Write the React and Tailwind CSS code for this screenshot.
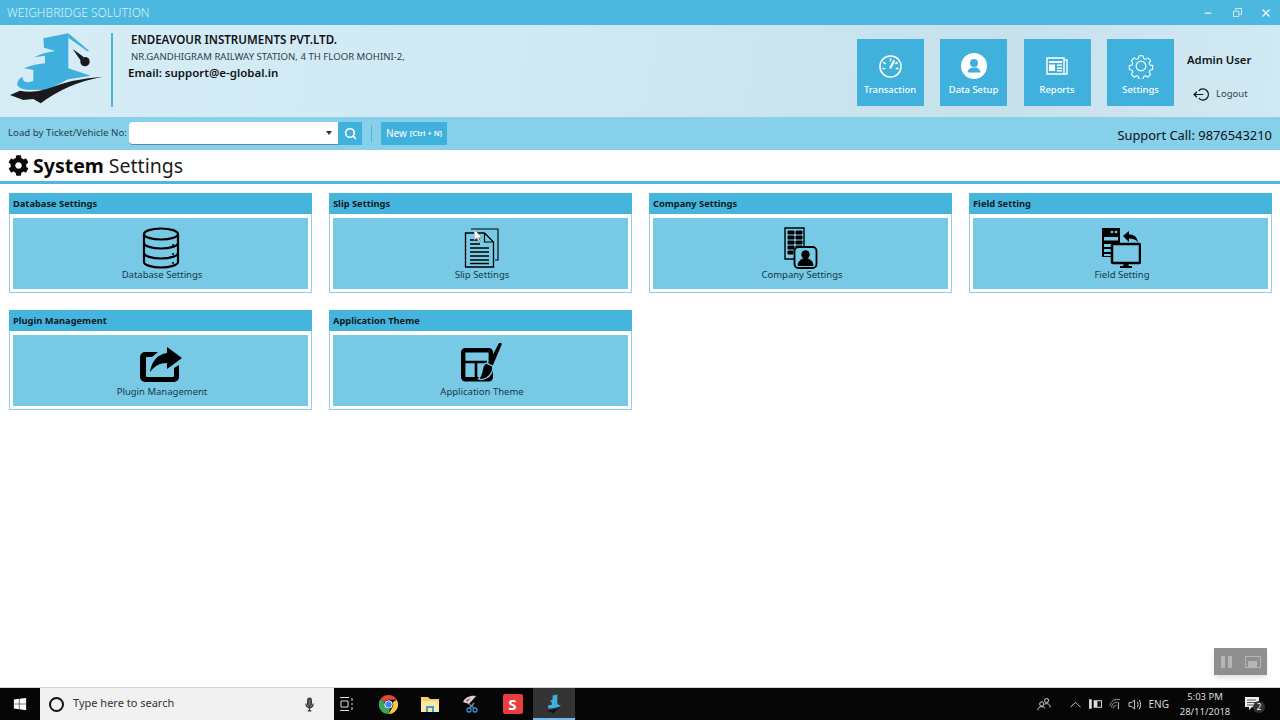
import { FaCog, FaWindows } from "react-icons/fa";
import { FiSearch, FiX, FiMinus } from "react-icons/fi";

const font = { fontFamily: '"Noto Sans", "Open Sans", sans-serif' };

function Logo() {
  return (
    <svg viewBox="0 0 360 270" width="120" height="90" className="shrink-0">
      <path fill="#3fb0dd" d="M130 40 L205 25 L205 130 L272 152 L205 163 L140 195 L80 194 Q50 190 52 175 Q54 162 68 155 Q66 172 85 172 L100 168 L100 135 L72 130 Q100 118 135 115 L135 92 L102 97 Q130 82 166 78 L132 68 Z" />
      <path fill="#3fb0dd" d="M205 25 L268 78 L262 79 L205 38 Z" />
      <path fill="#1a1a1e" d="M30 210 L60 197 Q100 205 140 192 Q220 160 308 155 Q200 175 122 235 L100 222 L70 225 Z" />
      <path fill="#1a1a1e" d="M218 72 L250 95 L243 108 Z" />
      <circle cx="255" cy="110" r="14" fill="#1a1a1e" />
    </svg>
  );
}

function NavIcon({ name }) {
  if (name === "Transaction") {
    return (
      <svg viewBox="0 0 26 26" width="25" height="25" fill="none" stroke="#fff" strokeWidth="1.600" strokeLinecap="round">
        <circle cx="13" cy="13" r="11" />
        <path d="M13 5v2M6 9l1.500 1M20 9l-1.500 1M5 15h2M19 15h2" />
        <path d="M16.500 7.500 13 14" strokeWidth="2.400" />
      </svg>
    );
  }
  if (name === "Data Setup") {
    return (
      <svg viewBox="0 0 26 26" width="26" height="26">
        <circle cx="13" cy="13" r="13" fill="#fff" />
        <circle cx="13" cy="10" r="4" fill="#3fb0dd" />
        <path fill="#3fb0dd" d="M6.500 19.500c.5-3.500 3-4.500 4.500-5h4c1.500.5 4 1.500 4.500 5z" />
      </svg>
    );
  }
  if (name === "Reports") {
    return (
      <svg viewBox="0 0 22 18" width="22" height="18">
        <path fill="none" stroke="#fff" strokeWidth="1.400" d="M1 1h17v16H1zM18 3h3v14h-3" />
        <path fill="#fff" d="M3 4h13v2H3zM3 7.500h6v6.500H3zM11 7.500h5v1.500h-5zM11 10.500h5V12h-5zM11 13h5v1.500h-5z" />
      </svg>
    );
  }
  return (
    <svg viewBox="0 0 24 24" width="26" height="26" fill="none" stroke="#fff" strokeWidth="1.100" strokeLinejoin="round">
      <path d="M10 1.500h4l.7 2.900 1.900.8 2.500-1.500 2.800 2.800-1.500 2.500.8 1.900 2.800.7v4l-2.800.7-.8 1.900 1.500 2.500-2.800 2.800-2.500-1.500-1.900.8-.7 2.700h-4l-.7-2.700-1.900-.8-2.500 1.500-2.800-2.800 1.500-2.500-.8-1.900-2.800-.7v-4l2.800-.7.8-1.900-1.500-2.500 2.800-2.800 2.500 1.500 1.900-.8z" transform="translate(1.200 1.200) scale(.9)" />
      <circle cx="12" cy="12" r="4.500" />
    </svg>
  );
}

function NavButton({ label }) {
  return (
    <div className="w-[67px] h-[67px] bg-[#40b0dc] flex flex-col items-center pt-[14px] text-white">
      <div className="h-[26px] flex items-center justify-center">
        <NavIcon name={label} />
      </div>
      <span className="text-[9.400px] font-medium mt-[4px] leading-[14px] whitespace-nowrap">{label}</span>
    </div>
  );
}

function CardIcon({ name }) {
  if (name === "Database Settings") {
    return (
      <svg viewBox="0 0 38 42" width="38" height="42" fill="none" stroke="#000" strokeWidth="2.200">
        <ellipse cx="19" cy="7" rx="17" ry="5.500" />
        <path d="M2 7v28c0 3 8 5.500 17 5.500S36 38 36 35V7" />
        <path d="M2 16c0 3 8 5.500 17 5.500S36 19 36 16M2 26c0 3 8 5.500 17 5.500S36 29 36 26" />
        <circle cx="31" cy="18" r="1" fill="#000" stroke="none" />
        <circle cx="31" cy="27" r="1" fill="#000" stroke="none" />
        <circle cx="31" cy="36" r="1" fill="#000" stroke="none" />
      </svg>
    );
  }
  if (name === "Slip Settings") {
    return (
      <svg viewBox="0 0 36 40" width="36" height="40" fill="none" stroke="#000">
        <path strokeWidth="1.100" d="M8 1h27v31h-3" />
        <path strokeWidth="1.300" fill="#78c9e6" d="M2.500 5h19l9 9v25h-28z" />
        <path strokeWidth="1.200" d="M21.500 5v9h9" />
        <path strokeWidth="1.700" d="M7 12h10M7 16h10M7 20h19M7 24h19M7 28h19M7 32h19M7 35.500h19" />
      </svg>
    );
  }
  if (name === "Company Settings") {
    return (
      <svg viewBox="0 0 36 42" width="36" height="42" fill="none" stroke="#000">
        <path strokeWidth="1.400" d="M2 1h19v31H2z" />
        <path fill="#000" d="M5 4h6v3H5zM13 4h6v3h-6zM5 9h6v3H5zM13 9h6v3h-6zM5 14h6v3H5zM13 14h6v3h-6zM5 19h6v3H5zM13 19h6v3h-6zM5 24h5v3H5z" />
        <rect x="11.500" y="20" width="22" height="21" rx="4" fill="#78c9e6" strokeWidth="1.800" />
        <circle cx="22.500" cy="27.500" r="3.800" fill="#000" />
        <path fill="#000" d="M15 38.500c.5-5 4-7 7.500-7s7 2 7.500 7z" />
      </svg>
    );
  }
  if (name === "Field Setting") {
    return (
      <svg viewBox="0 0 40 42" width="40" height="42">
        <path fill="#000" d="M1 1h18v29H1z" />
        <path fill="#78c9e6" d="M3 10h14v3.500H3zM3 17h8v3H3zM3 22h8v3H3zM3 27h8v2H3z" />
        <circle cx="11" cy="5" r="1.300" fill="#78c9e6" />
        <circle cx="15" cy="5" r="1.300" fill="#78c9e6" />
        <path fill="#000" d="M22 9l6-5v3.500c5 0 8 2 9 8-2-3-5-4-9-4V15z" />
        <rect x="11" y="17" width="28" height="19" rx="1" fill="#78c9e6" stroke="#000" strokeWidth="2.500" />
        <path fill="#000" d="M23 36h4l1 3h3v2H19v-2h3z" />
      </svg>
    );
  }
  if (name === "Plugin Management") {
    return (
      <svg viewBox="0 0 42 36" width="42" height="36">
        <path fill="#000" d="M6 5h12l-6 5H7a1 1 0 0 0-1 1v18a1 1 0 0 0 1 1h26a1 1 0 0 0 1-1v-8l5-3v12a5 5 0 0 1-5 5H5a5 5 0 0 1-5-5V10a5 5 0 0 1 5-5z" />
        <path fill="#000" d="M27 0l15 11-15 11v-6c-8 0-12 3-17 9 1-9 7-18 17-19z" />
      </svg>
    );
  }
  return (
    <svg viewBox="0 0 42 44" width="42" height="44">
      <rect x="3.200" y="7.200" width="27.600" height="29" rx="2" fill="none" stroke="#000" strokeWidth="4.400" />
      <path fill="none" stroke="#000" strokeWidth="2.600" d="M3 19h24M16 19v17" />
      <path fill="#000" d="M39 0c2-1 3 0 2.500 2L33 22l-4.500-2z" />
      <path fill="#000" stroke="#78c9e6" strokeWidth="1.300" d="M26 20l6.500 3c1 5-2 10-6 12-3 1.500-6 2-8 1 2-2 2.500-4 3.500-8 .5-4 1.500-6.500 4-8z" />
    </svg>
  );
}

function Card({ title }) {
  return (
    <div className="h-[100px] flex flex-col bg-white border-x border-b border-[#8fd0e8]">
      <div className="h-[21px] -mx-px bg-[#46b5de] flex items-center px-[4px] pt-[1px] text-[9.300px] font-bold text-[#0b1a22] leading-none">
        {title}
      </div>
      <div className="flex-1 mx-[3px] mt-[4px] mb-[3px] bg-[#78c9e6] flex flex-col items-center justify-end pb-[8px]">
        <div className="h-[44px] flex items-center justify-center">
          <CardIcon name={title} />
        </div>
        <span className="text-[9.500px] leading-[13px] mt-[-2px] ml-[3px] text-[#123a4e]">{title}</span>
      </div>
    </div>
  );
}

function Toolbar() {
  return (
    <div className="h-[33px] bg-[#86d0ea] flex items-center pl-[8px] pr-[8px]">
      <span className="text-[9.700px] text-[#26414f] w-[121px] whitespace-nowrap">Load by Ticket/Vehicle No:</span>
      <div className="w-[209px] h-[23px] bg-white border-b border-[#5b8ea6] rounded-l-sm flex items-center justify-end pr-[6px]">
        <span className="w-0 h-0 border-x-[3px] border-x-transparent border-t-[4px] border-t-[#333]" />
      </div>
      <div className="w-[24px] h-[23px] bg-[#40b0dc] flex items-center justify-center text-white">
        <FiSearch size={13} strokeWidth={3} />
      </div>
      <div className="w-px h-[17px] bg-[#4db4dc] ml-[9px] mr-[9px]" />
      <div className="w-[66px] h-[23px] bg-[#40b0dc] text-white flex items-center justify-center gap-[3px] whitespace-nowrap">
        <span className="text-[10px]">New</span>
        <span className="text-[7.500px] font-semibold mt-[1px]">[Ctrl + N]</span>
      </div>
      <span className="ml-auto mt-[4px] text-[12.900px] text-[#0b1216] whitespace-nowrap">Support Call: 9876543210</span>
    </div>
  );
}

function Taskbar() {
  return (
    <div className="h-[33px] bg-[#060606] border-t border-[#d4d4d4] flex items-center text-[#e0e0e0]">
      <div className="w-[40px] flex justify-center text-white">
        <FaWindows size={14} />
      </div>
      <div className="w-[294px] h-full bg-[#f1f1f1] flex items-center pl-[9px] pr-[20px] text-[#333]">
        <span className="w-[15px] h-[15px] rounded-full border-2 border-[#111] mr-[9px]" />
        <span className="text-[11px] mb-[1px]">Type here to search</span>
        <svg viewBox="0 0 10 16" width="9" height="15" className="ml-auto" fill="none" stroke="#333" strokeWidth="1.400">
          <rect x="3" y="1" width="4" height="9" rx="2" fill="#666" />
          <path d="M1 7c0 6 8 6 8 0M5 12v3M3 15h4" />
        </svg>
      </div>
      <div className="flex items-center h-full">
        <div className="w-[41px] flex justify-center ml-[-8px]">
          <svg viewBox="0 0 14 14" width="14" height="14" fill="none" stroke="#ddd">
            <path d="M0 .5h9M0 13.500h9M1 4h7v6H1zM12 1v3M12 6v2M12 10v3" />
          </svg>
        </div>
        <div className="w-[42px] flex justify-center">
          <svg viewBox="0 0 20 20" width="19" height="19">
            <path fill="#e0463a" d="M10 0a10 10 0 0 1 8.700 5H10a5 5 0 0 0-4.800 3.600L2.200 3.500A10 10 0 0 1 10 0z" />
            <path fill="#f7c93e" d="M18.700 5a10 10 0 0 1-8.700 15l4.300-7.500A5 5 0 0 0 14.300 7.500z" />
            <path fill="#3aa757" d="M2.200 3.500 6.500 11a4 4 0 0 0 5 3.800L10 20A10 10 0 0 1 2.200 3.500z" />
            <circle cx="10" cy="10" r="4" fill="#4285f4" stroke="#fff" />
          </svg>
        </div>
        <div className="w-[41px] flex justify-center">
          <svg viewBox="0 0 18 16" width="18" height="16">
            <path fill="#f6cf63" d="M0 1h7l2 2h9v13H0z" />
            <path fill="#fbe7a1" d="M0 5h18v11H0z" />
            <path fill="#3aa0d0" d="M5 10h8v6h-2v-4H7v4H5z" />
          </svg>
        </div>
        <div className="w-[42px] flex justify-center">
          <svg viewBox="0 0 18 18" width="18" height="18">
            <path fill="#d9d4d4" d="M1 7c2-5 8-7 13-6L7 9z" />
            <path fill="#c8484c" d="M4 5l5-2-4 4z" />
            <path stroke="#3a8fd0" strokeWidth="1.500" fill="none" d="M7 9l5 4" />
            <circle cx="13" cy="15" r="2" fill="none" stroke="#3a8fd0" strokeWidth="1.300" />
            <circle cx="7" cy="15" r="2" fill="none" stroke="#3a8fd0" strokeWidth="1.300" />
            <path stroke="#888" strokeWidth="1.500" d="M12 8l-4 5" />
          </svg>
        </div>
        <div className="w-[41px] flex justify-center">
          <div className="w-[20px] h-[20px] bg-[#e5403f] rounded-[2px] flex items-center justify-center text-white text-[15px] font-bold leading-none">S</div>
        </div>
        <div className="w-[42px] h-full bg-[#333] flex justify-center items-center relative">
          <svg viewBox="0 0 18 20" width="17" height="20">
            <path fill="#3fb0dd" d="M7 1l5-1v10l4 2-6 2-7 1q-2-2 0-4h3V8l-2-1 3-2z" />
            <path fill="#111" d="M1 17q6 0 15-4-5 3-8 7z" />
          </svg>
          <span className="absolute bottom-0 left-0 right-0 h-[2px] bg-[#76b9ed]" />
        </div>
      </div>
      <div className="ml-auto flex items-center h-full text-[#d8d8d8]">
        <svg viewBox="0 0 16 16" width="14" height="14" fill="none" stroke="#ddd" strokeWidth="1.100" className="mr-[19px]">
          <circle cx="5.500" cy="8" r="2.500" />
          <path d="M1 15c0-3 2-4 4.500-4S9 12 9 13" />
          <circle cx="11" cy="4" r="2.300" />
          <path d="M9 8c3-1 6 0 6 4" />
        </svg>
        <svg viewBox="0 0 12 7" width="11" height="7" fill="none" stroke="#ddd" className="mr-[8px]"><path d="M.5 6.500 6 1l5.500 5.500" /></svg>
        <svg viewBox="0 0 14 10" width="13" height="10" className="mr-[7px]">
          <path fill="#ddd" d="M0 0h3v10H0zM5 1h9v8H5z" />
          <path fill="#111" d="M9 2h4v6H9z" />
        </svg>
        <svg viewBox="0 0 14 14" width="12" height="12" fill="none" stroke="#aaa" className="mr-[7px]">
          <path d="M1 9a9 9 0 0 1 12-7M3 11a6 6 0 0 1 7-6M5 12a3 3 0 0 1 4-3" />
          <path d="M11 5v8" stroke="#ddd" />
        </svg>
        <svg viewBox="0 0 16 14" width="15" height="13" fill="none" stroke="#ddd" className="mr-[6px]">
          <path d="M1 5h3l3-3v10L4 9H1zM10 4c1 2 1 4 0 6M12 2c2 3 2 7 0 10" />
        </svg>
        <span className="text-[10px] mr-[8px]">ENG</span>
        <div className="w-[56px] text-center text-[9.500px] leading-[15px] text-[#dcdcdc]">
          <div>5:03 PM</div>
          <div>28/11/2018</div>
        </div>
        <div className="w-[38px] flex justify-center relative mr-[9px]">
          <svg viewBox="0 0 14 14" width="14" height="14"><path fill="#eee" d="M0 0h14v10H7l-3 3v-3H0z" /><path stroke="#555" d="M2 3h9M2 5.500h9M2 8h6" /></svg>
          <span className="absolute left-[20px] top-[4px] w-[12px] h-[12px] rounded-full bg-[#333] text-white text-[8px] leading-[12px] text-center">2</span>
        </div>
      </div>
    </div>
  );
}

function App() {
  return (
    <div style={font} className="relative w-[1280px] h-screen bg-white flex flex-col overflow-hidden">
      {/* title bar */}
      <div className="h-[25px] bg-[#4cb8df] flex items-center pl-[7px] text-[#dff3fa]">
        <span className="text-[12px] font-light whitespace-nowrap">WEIGHBRIDGE SOLUTION</span>
        <div className="ml-auto flex items-center text-[#e6f6fb]">
          <FiMinus size={10} strokeWidth={3} />
          <svg viewBox="0 0 10 10" width="9" height="9" className="ml-[20px]" fill="none" stroke="#d8f0f8"><path d="M.5 3.500h6v6h-6zM3 3V.5h6.500V7H7" /></svg>
          <FiX size={12} strokeWidth={3} className="ml-[18px] mr-[8px]" />
        </div>
      </div>

      {/* header */}
      <div className="h-[92px] bg-[linear-gradient(100deg,#d6edf6_0%,#cfe8f3_45%,#c7e1ec_78%,#d1e9f3_100%)] flex items-start">
        <Logo />
        <div className="w-[2px] h-[74px] mt-[8px] bg-[#49b3da] mr-[18px] -ml-[9px]" />
        <div className="pt-[7px] text-[#101316]">
          <div className="text-[11.600px] font-semibold leading-[15px] whitespace-nowrap">ENDEAVOUR INSTRUMENTS PVT.LTD.</div>
          <div className="text-[9.600px] leading-[16px] mt-[2px] text-[#2c3e48] whitespace-nowrap">NR.GANDHIGRAM RAILWAY STATION, 4 TH FLOOR MOHINI-2,</div>
          <div className="text-[11.500px] font-semibold leading-[16px] -ml-[3px] whitespace-nowrap">Email: support@e-global.in</div>
        </div>
        <div className="ml-auto flex items-start pt-[14px]">
          <div className="flex gap-[16.500px]">
            <NavButton label="Transaction" />
            <NavButton label="Data Setup" />
            <NavButton label="Reports" />
            <NavButton label="Settings" />
          </div>
          <div className="w-[106px] pl-[13px] pt-[13px]">
            <div className="text-[11.300px] font-semibold text-[#0d1418] leading-[16px]">Admin User</div>
            <div className="flex items-center mt-[19px] pl-[6px] gap-[6px] text-[#33444e]">
              <svg viewBox="0 0 18 14" width="17" height="13" fill="none" stroke="#111" strokeWidth="1.300">
                <path d="M6 3a6 6 0 1 1 0 8" />
                <path d="M11 7H1M4 4 1 7l3 3" />
              </svg>
              <span className="text-[9.500px]">Logout</span>
            </div>
          </div>
        </div>
      </div>

      <Toolbar />

      {/* page title */}
      <div className="h-[31px] flex items-center pl-[8px] gap-[4px]">
        <FaCog size={21} color="#0a0a0a" />
        <span className="text-[19.500px] text-[#1b1b1b] whitespace-nowrap"><b className="font-bold text-[#0a0a0a]">System</b> Settings</span>
      </div>
      <div className="h-[3px] bg-[#4cb8df]" />

      {/* cards */}
      <div className="flex-1 pl-[9px] pr-[8px] pt-[9px]">
        <div className="grid grid-cols-4 gap-x-[17px] gap-y-[17px]">
          <Card title="Database Settings" />
          <Card title="Slip Settings" />
          <Card title="Company Settings" />
          <Card title="Field Setting" />
          <Card title="Plugin Management" />
          <Card title="Application Theme" />
        </div>
      </div>

      <Taskbar />

      {/* mouse cursor on slip settings */}
      <svg viewBox="0 0 10 16" width="9" height="14" className="absolute left-[474px] top-[229px]">
        <path d="M0 0v13l3-3 2 5 2-1-2-4h4z" fill="#fff" stroke="#555" strokeWidth=".6" />
      </svg>

      {/* recorder overlay */}
      <div className="absolute left-[1214px] top-[648px] w-[53px] h-[27px] bg-[#8f8f8f] shadow-md flex items-center justify-center gap-[13px]">
        <div className="flex gap-[3px]">
          <span className="w-[4px] h-[12px] bg-[#b5b5b5]" />
          <span className="w-[4px] h-[12px] bg-[#b5b5b5]" />
        </div>
        <div className="w-[16px] h-[12px] border border-[#b5b5b5] flex items-end justify-center">
          <span className="w-[9px] h-[6px] bg-[#b5b5b5]" />
        </div>
      </div>
    </div>
  );
}

export default App;
